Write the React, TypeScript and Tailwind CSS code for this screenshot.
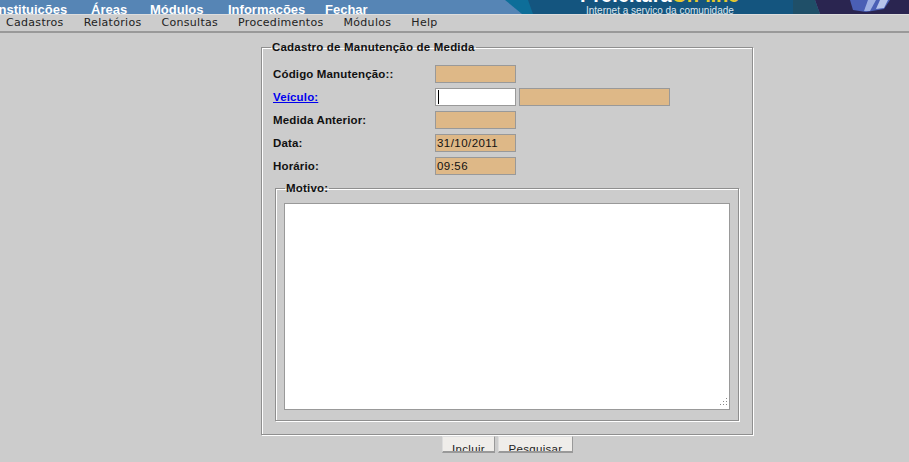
const navItems = [
  { label: "Instituições", w: "w-[96px]" },
  { label: "Áreas", w: "w-[59px]" },
  { label: "Módulos", w: "w-[78px]" },
  { label: "Informações", w: "w-[97px]" },
  { label: "Fechar", w: "w-[60px]" },
];

const menuItems = ["Cadastros", "Relatórios", "Consultas", "Procedimentos", "Módulos", "Help"];

function Row({ label, link, children }: { label: string; link?: boolean; children: React.ReactNode }) {
  return (
    <div className="flex h-[18px] items-center">
      <div className={`w-[162px] pt-[2px] text-[11.5px] font-bold tracking-[0.15px] ${link ? "text-[#0000ee] underline" : "text-[#111]"}`}>
        {label}
      </div>
      {children}
    </div>
  );
}

function Field({ value, className = "w-[81px]" }: { value?: string; className?: string }) {
  return (
    <div className={`h-[18px] border border-[#999] bg-[#deb887] pl-[1px] text-[11.5px] leading-[17px] tracking-[0.45px] text-[#111] ${className}`}>
      {value}
    </div>
  );
}

export default function App() {
  return (
    <div className="h-[462px] w-[909px] overflow-hidden bg-[#cccccc] font-['Liberation_Sans',sans-serif]">
      {/* Banner */}
      <div className="relative flex h-[14px] overflow-hidden bg-[#5685b5] text-[13px] font-bold leading-[20px] text-white">
        <div className="ml-[-5px] flex">
          {navItems.map((n) => (
            <span key={n.label} className={n.w}>{n.label}</span>
          ))}
        </div>
        <svg className="absolute left-0 top-0" width="909" height="14" viewBox="0 0 909 14">
          <polygon points="505,0 522,14 800,14 800,0" fill="#0d6e99" />
          <polygon points="528,0 533,14 793,14 793,0" fill="#14557f" />
          <polygon points="793,0 793,14 820,14 815,0" fill="#1f4f68" />
          <polygon points="815,0 820,14 909,14 909,0" fill="#2a2550" />
          <polygon points="850,0 853,10 866,12 884,9 890,0" fill="#4a5fb5" />
          <polygon points="868,0 864,11 870,11 876,0" fill="#9fb0e2" />
          <polygon points="880,0 876,9 884,8 888,0" fill="#b7c4ea" />
        </svg>
        <span className="absolute left-[580px] top-[-15px] text-[20px] leading-[20px] tracking-[-0.2px] text-white">
          Prefeitura<span className="text-[#e6c92e]">On-line</span>
        </span>
        <span className="absolute left-[586px] top-[5px] text-[10px] font-normal leading-[12px] text-[#dce6ee]">
          Internet a serviço da comunidade
        </span>
      </div>

      {/* Menu bar */}
      <div className="flex h-[19px] items-center border-b-2 border-t border-b-[#999] border-t-[#ddd] pl-[6px] font-['DejaVu_Sans',sans-serif] text-[11px] tracking-[0.3px] text-[#222]">
        <div className="flex gap-[20px]">
          {menuItems.map((m) => (
            <span key={m}>{m}</span>
          ))}
        </div>
      </div>

      {/* Form */}
      <div className="flex flex-col items-start pl-[261px] pt-[8px]">
        <fieldset className="h-[394px] w-[492px] border border-[#8f8f8f] px-[13px] shadow-[1px_1px_0_#fff,inset_1px_1px_0_#fff]">
          <legend className="ml-[-4px] px-[1px] text-[11.5px] font-bold leading-[12px] tracking-[0.2px] text-[#111]">
            Cadastro de Manutenção de Medida
          </legend>
          <div className="ml-[-2px] mt-[12px] flex flex-col gap-[5px]">
            <Row label="Código Manutenção::">
              <Field />
            </Row>
            <Row label="Veículo:" link>
              <div className="flex h-[18px] w-[81px] items-center border border-[#999] bg-white pl-[2px]">
                <div className="h-[14px] w-px bg-black" />
              </div>
              <Field className="ml-[3px] w-[151px]" />
            </Row>
            <Row label="Medida Anterior:">
              <Field />
            </Row>
            <Row label="Data:">
              <Field value="31/10/2011" />
            </Row>
            <Row label="Horário:">
              <Field value="09:56" />
            </Row>
          </div>
          <fieldset className="mt-[7px] h-[239px] border border-[#8f8f8f] px-[8px] shadow-[1px_1px_0_#fff,inset_1px_1px_0_#fff]">
            <legend className="ml-[1px] px-[1px] text-[11.5px] font-bold leading-[12px] tracking-[0.2px] text-[#111]">Motivo:</legend>
            <div className="relative mt-[9px] h-[207px] border border-[#999] bg-white">
              <svg className="absolute bottom-0 right-0" width="12" height="12" viewBox="0 0 12 12" fill="#888">
                <rect x="9" y="1" width="1" height="1" />
                <rect x="6" y="4" width="1" height="1" />
                <rect x="9" y="4" width="1" height="1" />
                <rect x="3" y="7" width="1" height="1" />
                <rect x="6" y="7" width="1" height="1" />
                <rect x="9" y="7" width="1" height="1" />
              </svg>
            </div>
          </fieldset>
        </fieldset>
        <div className="ml-[181px] mt-[1px] flex gap-[3px]">
          <div className="h-[17px] w-[53px] overflow-hidden border border-b-2 border-[#999] border-l-[#ddd] border-t-[#ddd] bg-[#efedea] text-center text-[11.5px] leading-[24px] tracking-[0.3px] text-[#222]">
            Incluir
          </div>
          <div className="h-[17px] w-[75px] overflow-hidden border border-b-2 border-[#999] border-l-[#ddd] border-t-[#ddd] bg-[#efedea] text-center text-[11.5px] leading-[24px] tracking-[0.3px] text-[#222]">
            Pesquisar
          </div>
        </div>
      </div>
    </div>
  );
}
